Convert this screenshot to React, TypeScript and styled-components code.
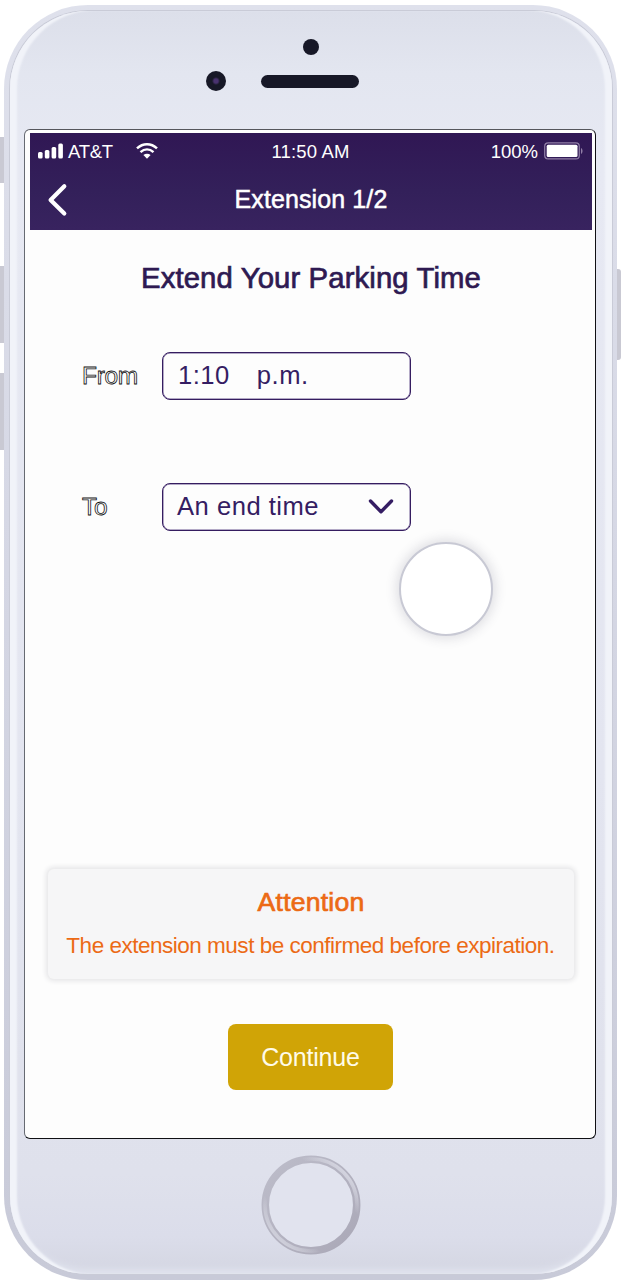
import React from 'react';
import styled, { createGlobalStyle } from 'styled-components';

const Global = createGlobalStyle`
  * { box-sizing: border-box; }
  body { margin: 0; background: #fff; font-family: "Liberation Sans", Arial, sans-serif; }
`;

const Stage = styled.div`
  position: relative;
  width: 635px;
  height: 1288px;
  padding: 5px 0 0 4px;
  overflow: hidden;
`;

const SideKey = styled.div<{ $x: number; $y: number; $h: number }>`
  position: absolute;
  left: ${p => p.$x}px;
  top: ${p => p.$y}px;
  width: 5px;
  height: ${p => p.$h}px;
  border-radius: ${p => (p.$x > 300 ? '0 3px 3px 0' : '0')};
  background: #c9c9d3;
`;

const Rim = styled.div`
  position: relative;
  width: 613px;
  height: 1275px;
  padding: 6px 5px 6px 6px;
  border-radius: 84px;
  background: linear-gradient(#dfe1ec, #d6d8e5 40%, #c8cad8);
`;

const Face = styled.div`
  height: 100%;
  padding: 118px 0 0 14px;
  border-radius: 78px;
  background: linear-gradient(#dcdfea, #e3e6f0 5%, #e7e9f3 12%, #e3e5f0 60%, #dfe1ec 92%, #dbddea 97%, #d4d6e2);
  box-shadow: 0 0 0 1px #c9cbd7, inset 8px 0 2px -1px #f1f3f9, inset -8px 0 2px -1px #f1f3f9, inset 0 -7px 6px -2px #e0e3ee;
`;

const Dot = styled.div<{ $x: number; $y: number; $size: number }>`
  position: absolute;
  left: ${p => p.$x}px;
  top: ${p => p.$y}px;
  width: ${p => p.$size}px;
  height: ${p => p.$size}px;
  border-radius: 50%;
  background: radial-gradient(circle, ${p => (p.$size > 17 ? '#49326f 0 2px, #171827 4px' : '#171827, #171827')});
`;

const Speaker = styled.div`
  position: absolute;
  left: 257px;
  top: 70px;
  width: 98px;
  height: 13px;
  border-radius: 7px;
  background: #171827;
`;

const Screen = styled.main`
  width: 572px;
  height: 1010px;
  padding: 3px 3px 0 5px;
  border: 1px solid #101014;
  border-left-color: #666a72;
  border-top-color: #55565c;
  border-radius: 6px;
  background: #fdfdfd;
  display: flex;
  flex-direction: column;
`;

const Header = styled.header`
  height: 97px;
  flex: none;
  background: linear-gradient(#301754, #33205a 60%, #38235f);
  color: #fff;
`;

const StatusBar = styled.div`
  display: grid;
  grid-template-columns: 1fr auto 1fr;
  align-items: center;
  height: 37px;
  padding: 0 9px 0 8px;
  font-size: 18.5px;
`;

const Group = styled.div<{ $end?: boolean }>`
  display: flex;
  align-items: center;
  justify-content: ${p => (p.$end ? 'flex-end' : 'flex-start')};
`;

const Carrier = styled.span`
  margin: 0 23px 0 5px;
  letter-spacing: -0.3px;
`;

const Clock = styled.span`
  letter-spacing: 0.15px;
`;

const Percent = styled.span`
  margin-right: 6px;
`;

const NavBar = styled.div`
  display: grid;
  grid-template-columns: 60px 1fr 60px;
  align-items: center;
  height: 59px;
  font-size: 25px;
  text-align: center;
  -webkit-text-stroke: 0.5px #fff;
  letter-spacing: 0.1px;
`;

const BackButton = styled.button`
  display: flex;
  border: 0;
  padding: 0 0 0 16px;
  background: none;
`;

const Body = styled.section`
  flex: 1;
  display: flex;
  flex-direction: column;
  align-items: center;
`;

const Title = styled.h1`
  margin: 30px 0 0;
  height: 36px;
  line-height: 36px;
  font-size: 29.3px;
  font-weight: 400;
  letter-spacing: 0.12px;
  color: #2e1a52;
  -webkit-text-stroke: 0.7px #2e1a52;
`;

const Field = styled.div<{ $gap: number }>`
  display: flex;
  align-items: center;
  align-self: flex-start;
  height: 48px;
  margin-top: ${p => p.$gap}px;
  padding-left: 52px;
`;

const Label = styled.label`
  width: 80px;
  font-size: 24.5px;
  letter-spacing: -0.3px;
  color: #fff;
  -webkit-text-stroke: 0.8px #111;
`;

const Box = styled.div`
  display: flex;
  align-items: center;
  width: 249px;
  height: 48px;
  padding: 0 16px 2px 14px;
  border: 1.6px solid #351d60;
  border-radius: 8px;
  font-size: 25.6px;
  letter-spacing: 0.5px;
  color: #351d63;
  box-shadow: inset 0 0 0 0.5px #6b5790;
`;

const TimeValue = styled.span`
  padding-left: 1px;
`;

const Period = styled.span`
  margin-left: 27px;
`;

const Chevron = styled.svg`
  margin-left: auto;
`;

const Notice = styled.aside`
  width: 526px;
  height: 110px;
  margin-top: 338px;
  padding-top: 19px;
  border-radius: 6px;
  background: #f6f6f7;
  box-shadow: 0 0 5px 2px #e5e5e7;
  color: #ec6a15;
  text-align: center;
`;

const NoticeTitle = styled.h2`
  margin: 0 0 15px;
  font-size: 26.6px;
  line-height: 29px;
  font-weight: 400;
  letter-spacing: 0.2px;
  -webkit-text-stroke: 0.7px #ec6a15;
`;

const NoticeText = styled.p`
  margin: 0 1px 0 0;
  font-size: 22.5px;
  line-height: 27px;
  letter-spacing: -0.49px;
  white-space: nowrap;
`;

const Continue = styled.button`
  width: 165px;
  height: 66px;
  margin: 45px 1px 0 0;
  border: 0;
  border-radius: 8px;
  background: #d0a406;
  color: #fffbe8;
  font: 25px "Liberation Sans", Arial, sans-serif;
  letter-spacing: -0.2px;
`;

const TouchPoint = styled.div`
  position: absolute;
  left: 395px;
  top: 537px;
  width: 94px;
  height: 94px;
  border: 2px solid #c8c9d4;
  border-radius: 50%;
  background: #fff;
  box-shadow: 0 0 11px 3px rgba(60, 60, 85, 0.15);
`;

const HomeButton = styled.svg`
  position: absolute;
  left: 257px;
  top: 1150px;
`;

export default function App() {
  return (
    <>
      <Global />
      <Stage>
        <SideKey $x={-1} $y={137} $h={46} />
        <SideKey $x={-1} $y={266} $h={77} />
        <SideKey $x={-1} $y={373} $h={77} />
        <SideKey $x={616} $y={269} $h={91} />
        <Rim>
          <Face>
            <Dot $x={299} $y={34} $size={16} />
            <Dot $x={202} $y={66} $size={20} />
            <Speaker />
            <Screen>
              <Header>
                <StatusBar>
                  <Group>
                    <svg width="25" height="18" fill="#fff">
                      <rect x="0" y="9" width="4.6" height="6.5" rx="1.5" />
                      <rect x="6.8" y="7" width="4.6" height="8.5" rx="1.5" />
                      <rect x="13.6" y="4" width="4.6" height="11.5" rx="1.5" />
                      <rect x="20.3" y="0.5" width="4.6" height="15" rx="1.5" />
                    </svg>
                    <Carrier>AT&amp;T</Carrier>
                    <svg width="22" height="18" viewBox="0 0 22 18" fill="none" stroke="#fff" strokeWidth="2.5">
                      <path d="M1 5.4C7-.1 15-.1 21 5.4M4.5 9.1c4-3.5 9-3.5 13 0" />
                      <path d="M7.4 12c2.2-1.8 5-1.8 7.2 0L11 15.7z" fill="#fff" stroke="none" />
                    </svg>
                  </Group>
                  <Clock>11:50 AM</Clock>
                  <Group $end>
                    <Percent>100%</Percent>
                    <svg width="39" height="20" viewBox="0 0 39 20">
                      <rect x=".7" y=".9" width="34.6" height="16" rx="3.5" fill="none" stroke="#917fa7" strokeWidth="1.2" />
                      <rect x="2.7" y="2.7" width="30.8" height="12.4" rx="1.5" fill="#fff" />
                      <path d="M37 6c2 1.2 2 4.8 0 6z" fill="#917fa7" />
                    </svg>
                  </Group>
                </StatusBar>
                <NavBar>
                  <BackButton aria-label="Back">
                    <svg width="22" height="34" viewBox="0 0 22 34" fill="none" stroke="#fff" strokeWidth="4.2" strokeLinecap="round" strokeLinejoin="round">
                      <path d="M18.3 3.2L4.6 17L18.3 30.6" />
                    </svg>
                  </BackButton>
                  <span>Extension 1/2</span>
                </NavBar>
              </Header>
              <Body>
                <Title>Extend Your Parking Time</Title>
                <Field $gap={56}>
                  <Label>From</Label>
                  <Box>
                    <TimeValue>1:10</TimeValue>
                    <Period>p.m.</Period>
                  </Box>
                </Field>
                <Field $gap={83}>
                  <Label>To</Label>
                  <Box>
                    <span>An end time</span>
                    <Chevron width="26" height="16" viewBox="0 0 26 16" fill="none" stroke="#351d63" strokeWidth="3.4" strokeLinecap="round" strokeLinejoin="round">
                      <path d="M2.5 3L13 13.8L23.5 3" />
                    </Chevron>
                  </Box>
                </Field>
                <Notice>
                  <NoticeTitle>Attention</NoticeTitle>
                  <NoticeText>The extension must be confirmed before expiration.</NoticeText>
                </Notice>
                <Continue>Continue</Continue>
              </Body>
            </Screen>
            <TouchPoint />
            <HomeButton width="100" height="100" viewBox="0 0 100 100">
              <defs>
                <linearGradient id="ring" x1="0" y1="0" x2="1" y2="1">
                  <stop offset="0" stopColor="#bdbdca" />
                  <stop offset="1" stopColor="#aaa8b7" />
                </linearGradient>
                <linearGradient id="shine" x1="0" y1="1" x2="1" y2="0">
                  <stop offset="0.1" stopColor="#d2d3de" />
                  <stop offset=".3" stopColor="#dfe0e9" stopOpacity="0" />
                  <stop offset=".7" stopColor="#dfe0e9" stopOpacity="0" />
                  <stop offset="0.9" stopColor="#d9dae5" />
                </linearGradient>
              </defs>
              <circle cx="50" cy="50" r="45.7" fill="#e1e3ee" stroke="url(#ring)" strokeWidth="7.5" />
              <circle cx="50" cy="50" r="46" fill="none" stroke="url(#shine)" strokeWidth="3.5" />
            </HomeButton>
          </Face>
        </Rim>
      </Stage>
    </>
  );
}
